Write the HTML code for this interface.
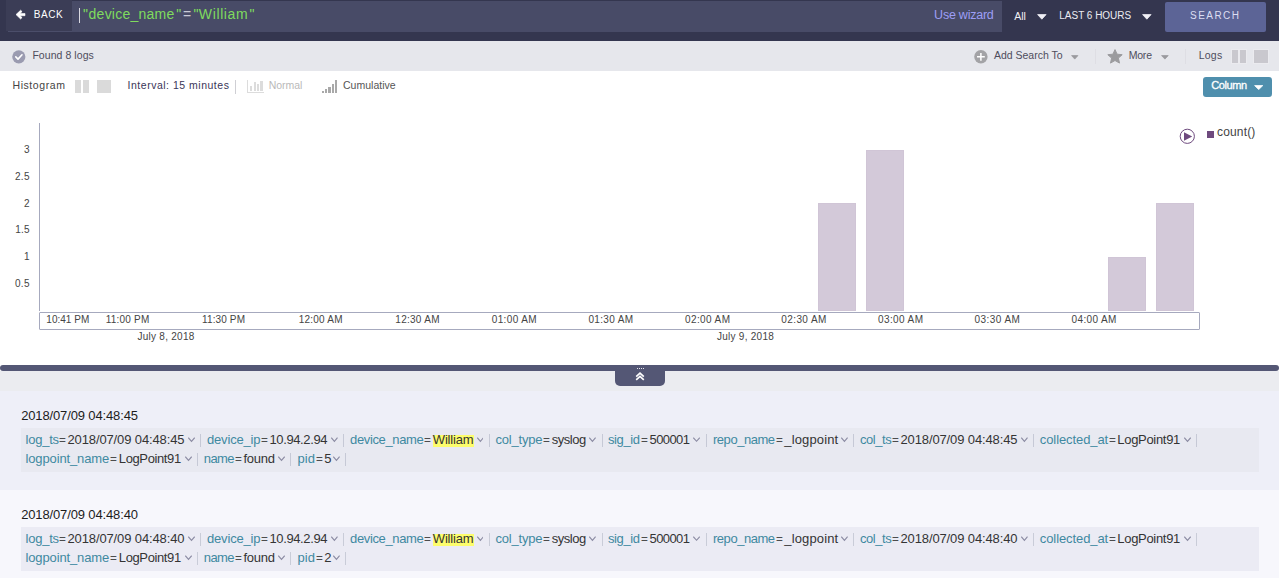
<!DOCTYPE html>
<html><head><meta charset="utf-8"><title>Search</title>
<style>
html,body{margin:0;padding:0;}
body{width:1279px;height:578px;overflow:hidden;position:relative;background:#fff;font-family:"Liberation Sans",sans-serif;}
.t{position:absolute;white-space:pre;line-height:20px;height:20px;display:block;}
.r{position:absolute;display:block;}
</style></head><body>
<div class="r" style="left:0px;top:0px;width:1279px;height:41px;background:#34364f;"></div>
<div class="r" style="left:6px;top:0px;width:66px;height:31px;background:#3b3d56;"></div>
<div class="r" style="left:8px;top:31px;width:64px;height:1px;background:#4b4e6a;"></div>
<div class="r" style="left:72px;top:1px;width:930px;height:31px;background:#484b67;"></div>
<svg class="r" style="left:15px;top:9px" width="12" height="12" viewBox="0 0 12 12"><path d="M5.6 1.2 L1 5.6 L5.6 10 L7.1 8.6 L5.1 6.7 H10 V4.5 H5.1 L7.1 2.6 Z" fill="#fff" stroke="#fff" stroke-width="0.6" stroke-linejoin="round"/></svg>
<span class="t" style="left:33.80px;top:4.93px;font-size:10px;color:#ffffff;letter-spacing:0.556px;">BACK</span>
<div class="r" style="left:79px;top:8px;width:1px;height:15px;background:#d8d8e0;"></div>
<span class="t" style="left:83.00px;top:4.05px;font-size:14px;color:#7fdb5e;">&quot;</span>
<span class="t" style="left:88.60px;top:4.05px;font-size:14px;color:#7fdb5e;letter-spacing:0.232px;">device_name</span>
<span class="t" style="left:176.30px;top:4.05px;font-size:14px;color:#7fdb5e;">&quot;</span>
<span class="t" style="left:183.00px;top:4.05px;font-size:14px;color:#c9cad6;">=</span>
<span class="t" style="left:193.40px;top:4.05px;font-size:14px;color:#7fdb5e;">&quot;</span>
<span class="t" style="left:198.80px;top:4.05px;font-size:14px;color:#7fdb5e;letter-spacing:0.633px;">William</span>
<span class="t" style="left:249.40px;top:4.05px;font-size:14px;color:#7fdb5e;">&quot;</span>
<span class="t" style="left:934.10px;top:4.67px;font-size:12.5px;color:#9d9ef6;letter-spacing:-0.236px;">Use wizard</span>
<span class="t" style="left:1014.20px;top:5.56px;font-size:10.5px;color:#f0f0f5;letter-spacing:0.015px;">All</span>
<svg class="r" style="left:1037.3px;top:14.2px" width="9.7" height="5.6" viewBox="0 0 9.7 5.6"><path d="M0.6 0.6 H9.1 L4.85 5.199999999999999 Z" fill="#f0f0f6" stroke="#f0f0f6" stroke-width="0.8" stroke-linejoin="round"/></svg>
<span class="t" style="left:1059.30px;top:5.73px;font-size:10px;color:#ececf2;letter-spacing:-0.015px;">LAST 6 HOURS</span>
<svg class="r" style="left:1141.9px;top:14.2px" width="9.7" height="5.6" viewBox="0 0 9.7 5.6"><path d="M0.6 0.6 H9.1 L4.85 5.199999999999999 Z" fill="#f0f0f6" stroke="#f0f0f6" stroke-width="0.8" stroke-linejoin="round"/></svg>
<div class="r" style="left:1165px;top:2px;width:101px;height:30px;background:#5c6496;border-radius:2px;"></div>
<span class="t" style="left:1190.00px;top:5.73px;font-size:10px;color:#dcdef2;letter-spacing:1.465px;">SEARCH</span>
<div class="r" style="left:0px;top:41px;width:1279px;height:30px;background:#e6e7ec;"></div>
<svg class="r" style="left:12px;top:49.5px" width="14" height="14" viewBox="0 0 14 14"><circle cx="6.8" cy="6.8" r="6.6" fill="#9a9bb0"/><path d="M3.8 6.9 L6 9.1 L10 4.8" fill="none" stroke="#fff" stroke-width="1.6" stroke-linecap="round" stroke-linejoin="round"/></svg>
<span class="t" style="left:32.40px;top:45.36px;font-size:10.5px;color:#4e4d5c;letter-spacing:0.063px;">Found 8 logs</span>
<svg class="r" style="left:974px;top:49.6px" width="14" height="14" viewBox="0 0 14 14"><circle cx="6.9" cy="6.8" r="6.7" fill="#a3a3a6"/><path d="M6.9 2.9 V10.7 M3 6.8 H10.8" fill="none" stroke="#fff" stroke-width="1.5"/></svg>
<span class="t" style="left:994.00px;top:45.36px;font-size:10.5px;color:#4e4d5c;letter-spacing:-0.016px;">Add Search To</span>
<svg class="r" style="left:1071.3px;top:55.2px" width="7.5" height="4.5" viewBox="0 0 7.5 4.5"><path d="M0.6 0.6 H6.9 L3.75 4.1 Z" fill="#9a9a9e" stroke="#9a9a9e" stroke-width="0.8" stroke-linejoin="round"/></svg>
<div class="r" style="left:1095px;top:49px;width:1px;height:15px;background:#dedee4;"></div>
<svg class="r" style="left:1107.2px;top:48.6px" width="16" height="15" viewBox="0 0 16 15"><path d="M8 0.6 L10.1 5.2 L15.2 5.7 L11.4 9.1 L12.5 14.1 L8 11.5 L3.5 14.1 L4.6 9.1 L0.8 5.7 L5.9 5.2 Z" fill="#9b9b9e" stroke="#9b9b9e" stroke-width="1" stroke-linejoin="round"/></svg>
<span class="t" style="left:1128.70px;top:45.26px;font-size:10.5px;color:#4e4d5c;letter-spacing:-0.208px;">More</span>
<svg class="r" style="left:1161px;top:55.2px" width="7.8" height="4.5" viewBox="0 0 7.8 4.5"><path d="M0.6 0.6 H7.2 L3.9 4.1 Z" fill="#9a9a9e" stroke="#9a9a9e" stroke-width="0.8" stroke-linejoin="round"/></svg>
<div class="r" style="left:1185px;top:49px;width:1px;height:15px;background:#dedee4;"></div>
<span class="t" style="left:1198.70px;top:45.26px;font-size:10.5px;color:#4e4d5c;letter-spacing:0.244px;">Logs</span>
<div class="r" style="left:1231px;top:49px;width:16px;height:15px;background:#ebebef;"></div>
<div class="r" style="left:1253px;top:49px;width:16px;height:15px;background:#ebebef;"></div>
<div class="r" style="left:1232.3px;top:50px;width:5.8px;height:12.8px;background:#c9c8ce;"></div>
<div class="r" style="left:1240.1px;top:50px;width:5.8px;height:12.8px;background:#c9c8ce;"></div>
<div class="r" style="left:1254.4px;top:50px;width:13.3px;height:12.8px;background:#c9c8ce;"></div>
<span class="t" style="left:12.50px;top:75.16px;font-size:10.5px;color:#444;letter-spacing:0.569px;">Histogram</span>
<div class="r" style="left:75.4px;top:80px;width:5.6px;height:12.7px;background:#dadada;"></div>
<div class="r" style="left:83.1px;top:80px;width:5.6px;height:12.7px;background:#dadada;"></div>
<div class="r" style="left:97.3px;top:80px;width:13.4px;height:12.7px;background:#dadada;"></div>
<span class="t" style="left:127.60px;top:75.16px;font-size:10.5px;color:#3a3658;letter-spacing:0.509px;">Interval: 15 minutes</span>
<div class="r" style="left:235px;top:80px;width:1px;height:14px;background:#cfcfd4;"></div>
<div class="r" style="left:247px;top:80px;width:1px;height:12.6px;background:#dcdcdc;"></div>
<div class="r" style="left:247px;top:92px;width:17px;height:1px;background:#dcdcdc;"></div>
<div class="r" style="left:250.2px;top:86px;width:2.3px;height:4.8px;background:#dcdcdc;"></div>
<div class="r" style="left:253.6px;top:82.3px;width:2.4px;height:8.5px;background:#dcdcdc;"></div>
<div class="r" style="left:257px;top:83.7px;width:2.4px;height:7.1px;background:#dcdcdc;"></div>
<div class="r" style="left:260.4px;top:81.1px;width:2.2px;height:9.7px;background:#dcdcdc;"></div>
<span class="t" style="left:268.80px;top:75.16px;font-size:10.5px;color:#b9b9b9;letter-spacing:-0.048px;">Normal</span>
<div class="r" style="left:322.1px;top:90.5px;width:2px;height:2.2px;background:#a9a9a9;"></div>
<div class="r" style="left:325.1px;top:89.3px;width:2.2px;height:3.4px;background:#a9a9a9;"></div>
<div class="r" style="left:328.4px;top:87.2px;width:2.2px;height:5.5px;background:#a9a9a9;"></div>
<div class="r" style="left:331.6px;top:84px;width:2.1px;height:8.7px;background:#a9a9a9;"></div>
<div class="r" style="left:334.9px;top:80px;width:2.1px;height:12.7px;background:#a9a9a9;"></div>
<span class="t" style="left:343.00px;top:75.16px;font-size:10.5px;color:#555;letter-spacing:0.020px;">Cumulative</span>
<div class="r" style="left:1203px;top:77px;width:69px;height:20px;background:#4f8fad;border-radius:3px;"></div>
<span class="t" style="left:1211.30px;top:75.19px;font-size:11px;color:#fff;letter-spacing:-0.401px;-webkit-text-stroke:0.3px #fff;">Column</span>
<svg class="r" style="left:1254px;top:84.6px" width="9.4" height="5.0" viewBox="0 0 9.4 5.0"><path d="M0.6 0.6 H8.8 L4.7 4.6 Z" fill="#fff" stroke="#fff" stroke-width="0.8" stroke-linejoin="round"/></svg>
<div class="r" style="left:39px;top:123px;width:1px;height:188px;background:#a6a9be;"></div>
<div class="r" style="left:39px;top:312px;width:1159px;height:16px;border:1px solid #a6a9be;border-radius:1px;background:#fff"></div>
<span class="t" style="left:23.94px;top:139.63px;font-size:10px;color:#444;">3</span>
<span class="t" style="left:14.90px;top:166.63px;font-size:10px;color:#444;letter-spacing:0.349px;">2.5</span>
<span class="t" style="left:23.94px;top:193.63px;font-size:10px;color:#444;">2</span>
<span class="t" style="left:15.30px;top:219.63px;font-size:10px;color:#444;letter-spacing:0.149px;">1.5</span>
<span class="t" style="left:23.94px;top:246.64px;font-size:10px;color:#444;">1</span>
<span class="t" style="left:14.90px;top:273.63px;font-size:10px;color:#444;letter-spacing:0.349px;">0.5</span>
<div class="r" style="left:817.6px;top:203.3px;width:38.1px;height:107.7px;background:#d3c9d9;box-shadow:inset 0 0 0 1px #d0c5d6;"></div>
<div class="r" style="left:866.0px;top:149.7px;width:38.1px;height:161.3px;background:#d3c9d9;box-shadow:inset 0 0 0 1px #d0c5d6;"></div>
<div class="r" style="left:1107.6px;top:256.9px;width:38.1px;height:54.1px;background:#d3c9d9;box-shadow:inset 0 0 0 1px #d0c5d6;"></div>
<div class="r" style="left:1155.9px;top:203.3px;width:38.1px;height:107.7px;background:#d3c9d9;box-shadow:inset 0 0 0 1px #d0c5d6;"></div>
<span class="t" style="left:46.30px;top:309.53px;font-size:10px;color:#444;letter-spacing:0.028px;">10:41 PM</span>
<span class="t" style="left:105.80px;top:309.53px;font-size:10px;color:#444;letter-spacing:0.206px;">11:00 PM</span>
<span class="t" style="left:202.00px;top:309.53px;font-size:10px;color:#444;letter-spacing:0.134px;">11:30 PM</span>
<span class="t" style="left:298.80px;top:309.53px;font-size:10px;color:#444;letter-spacing:0.207px;">12:00 AM</span>
<span class="t" style="left:395.30px;top:309.53px;font-size:10px;color:#444;letter-spacing:0.278px;">12:30 AM</span>
<span class="t" style="left:491.80px;top:309.53px;font-size:10px;color:#444;letter-spacing:0.350px;">01:00 AM</span>
<span class="t" style="left:588.40px;top:309.53px;font-size:10px;color:#444;letter-spacing:0.336px;">01:30 AM</span>
<span class="t" style="left:685.00px;top:309.53px;font-size:10px;color:#444;letter-spacing:0.393px;">02:00 AM</span>
<span class="t" style="left:781.30px;top:309.53px;font-size:10px;color:#444;letter-spacing:0.393px;">02:30 AM</span>
<span class="t" style="left:878.00px;top:309.53px;font-size:10px;color:#444;letter-spacing:0.393px;">03:00 AM</span>
<span class="t" style="left:974.50px;top:309.53px;font-size:10px;color:#444;letter-spacing:0.450px;">03:30 AM</span>
<span class="t" style="left:1071.50px;top:309.53px;font-size:10px;color:#444;letter-spacing:0.378px;">04:00 AM</span>
<span class="t" style="left:137.50px;top:326.53px;font-size:10px;color:#444;letter-spacing:0.261px;">July 8, 2018</span>
<span class="t" style="left:717.00px;top:326.53px;font-size:10px;color:#444;letter-spacing:0.261px;">July 9, 2018</span>
<svg class="r" style="left:1179px;top:127.5px" width="17" height="17" viewBox="0 0 17 17"><circle cx="8.3" cy="8.3" r="7.1" fill="#fff" stroke="#6e4a7e" stroke-width="1"/><path d="M5 4.2 L13.2 8.4 L5 12.7 Z" fill="#6e4a7e"/></svg>
<div class="r" style="left:1207px;top:130.7px;width:7.1px;height:7.1px;background:#6e4a7e;"></div>
<span class="t" style="left:1217.00px;top:122.44px;font-size:12px;color:#444;letter-spacing:0.159px;">count()</span>
<div class="r" style="left:0px;top:371px;width:1279px;height:20px;background:#ebecf0;"></div>
<div class="r" style="left:0px;top:365px;width:1279px;height:6px;background:#545775;border-radius:3px;"></div>
<div class="r" style="left:615px;top:368px;width:50px;height:18px;background:#545775;border-radius:0 0 5px 5px;"></div>
<div class="r" style="left:637px;top:367.5px;width:1px;height:1px;background:#e8e8f0;"></div>
<div class="r" style="left:639px;top:367.5px;width:1px;height:1px;background:#e8e8f0;"></div>
<div class="r" style="left:641px;top:367.5px;width:1px;height:1px;background:#e8e8f0;"></div>
<div class="r" style="left:643px;top:367.5px;width:1px;height:1px;background:#e8e8f0;"></div>
<svg class="r" style="left:635px;top:372px" width="10" height="9" viewBox="0 0 10 9"><path d="M1.2 4.6 L5 1.2 L8.8 4.6 M1.2 7.8 L5 4.4 L8.8 7.8" fill="none" stroke="#fff" stroke-width="1.7"/></svg>
<div class="r" style="left:0px;top:391px;width:1279px;height:99px;background:#eeeff8;"></div>
<div class="r" style="left:21px;top:428px;width:1238px;height:43.5px;background:#e8e9f1;"></div>
<span class="t" style="left:21.20px;top:405.50px;font-size:13px;color:#1c1c1c;letter-spacing:-0.138px;">2018/07/09 04:48:45</span>
<span class="t" style="left:25.50px;top:429.90px;font-size:13px;color:#3f89a1;letter-spacing:-0.238px;">log_ts</span>
<span class="t" style="left:59.20px;top:429.90px;font-size:13px;color:#4c4c4c;transform:scaleX(0.9);transform-origin:left;">=</span>
<span class="t" style="left:67.50px;top:429.90px;font-size:13px;color:#343434;letter-spacing:-0.127px;">2018/07/09 04:48:45</span>
<svg class="r" style="left:187.50px;top:437.30px" width="7.00" height="6" viewBox="0 0 7.00 6"><path d="M0.3 0.7 L3.50 4.3 L6.70 0.7" fill="none" stroke="#8a8aa2" stroke-width="1.1"/></svg>
<div class="r" style="left:200.3px;top:434.2px;width:1px;height:13px;background:#c6c9d6;"></div>
<span class="t" style="left:207.00px;top:429.90px;font-size:13px;color:#3f89a1;letter-spacing:-0.178px;">device_ip</span>
<span class="t" style="left:261.00px;top:429.90px;font-size:13px;color:#4c4c4c;transform:scaleX(0.9);transform-origin:left;">=</span>
<span class="t" style="left:269.50px;top:429.90px;font-size:13px;color:#343434;letter-spacing:-0.383px;">10.94.2.94</span>
<svg class="r" style="left:330.80px;top:437.30px" width="6.80" height="6" viewBox="0 0 6.80 6"><path d="M0.3 0.7 L3.40 4.3 L6.50 0.7" fill="none" stroke="#8a8aa2" stroke-width="1.1"/></svg>
<div class="r" style="left:343.0px;top:434.2px;width:1px;height:13px;background:#c6c9d6;"></div>
<span class="t" style="left:350.00px;top:429.90px;font-size:13px;color:#3f89a1;letter-spacing:-0.353px;">device_name</span>
<span class="t" style="left:424.00px;top:429.90px;font-size:13px;color:#4c4c4c;transform:scaleX(0.9);transform-origin:left;">=</span>
<div class="r" style="left:433px;top:435px;width:41.2px;height:12px;background:#fdfd6c;"></div>
<span class="t" style="left:432.80px;top:429.90px;font-size:13px;color:#343434;letter-spacing:-0.180px;">William</span>
<svg class="r" style="left:476.50px;top:437.30px" width="6.80" height="6" viewBox="0 0 6.80 6"><path d="M0.3 0.7 L3.40 4.3 L6.50 0.7" fill="none" stroke="#8a8aa2" stroke-width="1.1"/></svg>
<div class="r" style="left:488.7px;top:434.2px;width:1px;height:13px;background:#c6c9d6;"></div>
<span class="t" style="left:495.50px;top:429.90px;font-size:13px;color:#3f89a1;letter-spacing:-0.203px;">col_type</span>
<span class="t" style="left:543.20px;top:429.90px;font-size:13px;color:#4c4c4c;transform:scaleX(0.9);transform-origin:left;">=</span>
<span class="t" style="left:551.80px;top:429.90px;font-size:13px;color:#343434;letter-spacing:-0.490px;">syslog</span>
<svg class="r" style="left:589.30px;top:437.30px" width="6.90" height="6" viewBox="0 0 6.90 6"><path d="M0.3 0.7 L3.45 4.3 L6.60 0.7" fill="none" stroke="#8a8aa2" stroke-width="1.1"/></svg>
<div class="r" style="left:601.5px;top:434.2px;width:1px;height:13px;background:#c6c9d6;"></div>
<span class="t" style="left:608.00px;top:429.90px;font-size:13px;color:#3f89a1;letter-spacing:-0.393px;">sig_id</span>
<span class="t" style="left:641.00px;top:429.90px;font-size:13px;color:#4c4c4c;transform:scaleX(0.9);transform-origin:left;">=</span>
<span class="t" style="left:649.50px;top:429.90px;font-size:13px;color:#343434;letter-spacing:-0.576px;">500001</span>
<svg class="r" style="left:693.30px;top:437.30px" width="7.10" height="6" viewBox="0 0 7.10 6"><path d="M0.3 0.7 L3.55 4.3 L6.80 0.7" fill="none" stroke="#8a8aa2" stroke-width="1.1"/></svg>
<div class="r" style="left:705.8px;top:434.2px;width:1px;height:13px;background:#c6c9d6;"></div>
<span class="t" style="left:713.00px;top:429.90px;font-size:13px;color:#3f89a1;letter-spacing:-0.471px;">repo_name</span>
<span class="t" style="left:775.90px;top:429.90px;font-size:13px;color:#4c4c4c;transform:scaleX(0.9);transform-origin:left;">=</span>
<span class="t" style="left:784.30px;top:429.90px;font-size:13px;color:#343434;letter-spacing:0.141px;">_logpoint</span>
<svg class="r" style="left:840.80px;top:437.30px" width="6.90" height="6" viewBox="0 0 6.90 6"><path d="M0.3 0.7 L3.45 4.3 L6.60 0.7" fill="none" stroke="#8a8aa2" stroke-width="1.1"/></svg>
<div class="r" style="left:853.0px;top:434.2px;width:1px;height:13px;background:#c6c9d6;"></div>
<span class="t" style="left:860.00px;top:429.90px;font-size:13px;color:#3f89a1;letter-spacing:-0.432px;">col_ts</span>
<span class="t" style="left:892.20px;top:429.90px;font-size:13px;color:#4c4c4c;transform:scaleX(0.9);transform-origin:left;">=</span>
<span class="t" style="left:900.50px;top:429.90px;font-size:13px;color:#343434;letter-spacing:-0.127px;">2018/07/09 04:48:45</span>
<svg class="r" style="left:1020.80px;top:437.30px" width="6.80" height="6" viewBox="0 0 6.80 6"><path d="M0.3 0.7 L3.40 4.3 L6.50 0.7" fill="none" stroke="#8a8aa2" stroke-width="1.1"/></svg>
<div class="r" style="left:1032.9px;top:434.2px;width:1px;height:13px;background:#c6c9d6;"></div>
<span class="t" style="left:1039.80px;top:429.90px;font-size:13px;color:#3f89a1;letter-spacing:-0.089px;">collected_at</span>
<span class="t" style="left:1108.80px;top:429.90px;font-size:13px;color:#4c4c4c;transform:scaleX(0.9);transform-origin:left;">=</span>
<span class="t" style="left:1117.30px;top:429.90px;font-size:13px;color:#343434;letter-spacing:-0.309px;">LogPoint91</span>
<svg class="r" style="left:1183.50px;top:437.30px" width="7.00" height="6" viewBox="0 0 7.00 6"><path d="M0.3 0.7 L3.50 4.3 L6.70 0.7" fill="none" stroke="#8a8aa2" stroke-width="1.1"/></svg>
<div class="r" style="left:1195.5px;top:434.2px;width:1px;height:13px;background:#c6c9d6;"></div>
<span class="t" style="left:25.50px;top:448.90px;font-size:13px;color:#3f89a1;letter-spacing:-0.132px;">logpoint_name</span>
<span class="t" style="left:109.80px;top:448.90px;font-size:13px;color:#4c4c4c;transform:scaleX(0.9);transform-origin:left;">=</span>
<span class="t" style="left:118.80px;top:448.90px;font-size:13px;color:#343434;letter-spacing:-0.376px;">LogPoint91</span>
<svg class="r" style="left:185.00px;top:456.30px" width="7.00" height="6" viewBox="0 0 7.00 6"><path d="M0.3 0.7 L3.50 4.3 L6.70 0.7" fill="none" stroke="#8a8aa2" stroke-width="1.1"/></svg>
<div class="r" style="left:197.0px;top:453.2px;width:1px;height:13px;background:#c6c9d6;"></div>
<span class="t" style="left:203.80px;top:448.90px;font-size:13px;color:#3f89a1;letter-spacing:-0.640px;">name</span>
<span class="t" style="left:235.20px;top:448.90px;font-size:13px;color:#4c4c4c;transform:scaleX(0.9);transform-origin:left;">=</span>
<span class="t" style="left:243.50px;top:448.90px;font-size:13px;color:#343434;letter-spacing:-0.258px;">found</span>
<svg class="r" style="left:278.00px;top:456.30px" width="7.00" height="6" viewBox="0 0 7.00 6"><path d="M0.3 0.7 L3.50 4.3 L6.70 0.7" fill="none" stroke="#8a8aa2" stroke-width="1.1"/></svg>
<div class="r" style="left:290.3px;top:453.2px;width:1px;height:13px;background:#c6c9d6;"></div>
<span class="t" style="left:297.40px;top:448.90px;font-size:13px;color:#3f89a1;letter-spacing:0.126px;">pid</span>
<span class="t" style="left:315.80px;top:448.90px;font-size:13px;color:#4c4c4c;transform:scaleX(0.9);transform-origin:left;">=</span>
<span class="t" style="left:324.30px;top:448.90px;font-size:13px;color:#343434;">5</span>
<svg class="r" style="left:333.30px;top:456.30px" width="6.90" height="6" viewBox="0 0 6.90 6"><path d="M0.3 0.7 L3.45 4.3 L6.60 0.7" fill="none" stroke="#8a8aa2" stroke-width="1.1"/></svg>
<div class="r" style="left:345.3px;top:453.2px;width:1px;height:13px;background:#c6c9d6;"></div>
<div class="r" style="left:0px;top:490px;width:1279px;height:99px;background:#f7f7fc;"></div>
<div class="r" style="left:21px;top:527px;width:1238px;height:43.5px;background:#ebebf4;"></div>
<span class="t" style="left:21.20px;top:504.50px;font-size:13px;color:#1c1c1c;letter-spacing:-0.138px;">2018/07/09 04:48:40</span>
<span class="t" style="left:25.50px;top:528.90px;font-size:13px;color:#3f89a1;letter-spacing:-0.238px;">log_ts</span>
<span class="t" style="left:59.20px;top:528.90px;font-size:13px;color:#4c4c4c;transform:scaleX(0.9);transform-origin:left;">=</span>
<span class="t" style="left:67.50px;top:528.90px;font-size:13px;color:#343434;letter-spacing:-0.127px;">2018/07/09 04:48:40</span>
<svg class="r" style="left:187.50px;top:536.30px" width="7.00" height="6" viewBox="0 0 7.00 6"><path d="M0.3 0.7 L3.50 4.3 L6.70 0.7" fill="none" stroke="#8a8aa2" stroke-width="1.1"/></svg>
<div class="r" style="left:200.3px;top:533.1999999999999px;width:1px;height:13px;background:#c9ccd8;"></div>
<span class="t" style="left:207.00px;top:528.90px;font-size:13px;color:#3f89a1;letter-spacing:-0.178px;">device_ip</span>
<span class="t" style="left:261.00px;top:528.90px;font-size:13px;color:#4c4c4c;transform:scaleX(0.9);transform-origin:left;">=</span>
<span class="t" style="left:269.50px;top:528.90px;font-size:13px;color:#343434;letter-spacing:-0.383px;">10.94.2.94</span>
<svg class="r" style="left:330.80px;top:536.30px" width="6.80" height="6" viewBox="0 0 6.80 6"><path d="M0.3 0.7 L3.40 4.3 L6.50 0.7" fill="none" stroke="#8a8aa2" stroke-width="1.1"/></svg>
<div class="r" style="left:343.0px;top:533.1999999999999px;width:1px;height:13px;background:#c9ccd8;"></div>
<span class="t" style="left:350.00px;top:528.90px;font-size:13px;color:#3f89a1;letter-spacing:-0.353px;">device_name</span>
<span class="t" style="left:424.00px;top:528.90px;font-size:13px;color:#4c4c4c;transform:scaleX(0.9);transform-origin:left;">=</span>
<div class="r" style="left:433px;top:534px;width:41.2px;height:12px;background:#fdfd6c;"></div>
<span class="t" style="left:432.80px;top:528.90px;font-size:13px;color:#343434;letter-spacing:-0.180px;">William</span>
<svg class="r" style="left:476.50px;top:536.30px" width="6.80" height="6" viewBox="0 0 6.80 6"><path d="M0.3 0.7 L3.40 4.3 L6.50 0.7" fill="none" stroke="#8a8aa2" stroke-width="1.1"/></svg>
<div class="r" style="left:488.7px;top:533.1999999999999px;width:1px;height:13px;background:#c9ccd8;"></div>
<span class="t" style="left:495.50px;top:528.90px;font-size:13px;color:#3f89a1;letter-spacing:-0.203px;">col_type</span>
<span class="t" style="left:543.20px;top:528.90px;font-size:13px;color:#4c4c4c;transform:scaleX(0.9);transform-origin:left;">=</span>
<span class="t" style="left:551.80px;top:528.90px;font-size:13px;color:#343434;letter-spacing:-0.490px;">syslog</span>
<svg class="r" style="left:589.30px;top:536.30px" width="6.90" height="6" viewBox="0 0 6.90 6"><path d="M0.3 0.7 L3.45 4.3 L6.60 0.7" fill="none" stroke="#8a8aa2" stroke-width="1.1"/></svg>
<div class="r" style="left:601.5px;top:533.1999999999999px;width:1px;height:13px;background:#c9ccd8;"></div>
<span class="t" style="left:608.00px;top:528.90px;font-size:13px;color:#3f89a1;letter-spacing:-0.393px;">sig_id</span>
<span class="t" style="left:641.00px;top:528.90px;font-size:13px;color:#4c4c4c;transform:scaleX(0.9);transform-origin:left;">=</span>
<span class="t" style="left:649.50px;top:528.90px;font-size:13px;color:#343434;letter-spacing:-0.576px;">500001</span>
<svg class="r" style="left:693.30px;top:536.30px" width="7.10" height="6" viewBox="0 0 7.10 6"><path d="M0.3 0.7 L3.55 4.3 L6.80 0.7" fill="none" stroke="#8a8aa2" stroke-width="1.1"/></svg>
<div class="r" style="left:705.8px;top:533.1999999999999px;width:1px;height:13px;background:#c9ccd8;"></div>
<span class="t" style="left:713.00px;top:528.90px;font-size:13px;color:#3f89a1;letter-spacing:-0.471px;">repo_name</span>
<span class="t" style="left:775.90px;top:528.90px;font-size:13px;color:#4c4c4c;transform:scaleX(0.9);transform-origin:left;">=</span>
<span class="t" style="left:784.30px;top:528.90px;font-size:13px;color:#343434;letter-spacing:0.141px;">_logpoint</span>
<svg class="r" style="left:840.80px;top:536.30px" width="6.90" height="6" viewBox="0 0 6.90 6"><path d="M0.3 0.7 L3.45 4.3 L6.60 0.7" fill="none" stroke="#8a8aa2" stroke-width="1.1"/></svg>
<div class="r" style="left:853.0px;top:533.1999999999999px;width:1px;height:13px;background:#c9ccd8;"></div>
<span class="t" style="left:860.00px;top:528.90px;font-size:13px;color:#3f89a1;letter-spacing:-0.432px;">col_ts</span>
<span class="t" style="left:892.20px;top:528.90px;font-size:13px;color:#4c4c4c;transform:scaleX(0.9);transform-origin:left;">=</span>
<span class="t" style="left:900.50px;top:528.90px;font-size:13px;color:#343434;letter-spacing:-0.127px;">2018/07/09 04:48:40</span>
<svg class="r" style="left:1020.80px;top:536.30px" width="6.80" height="6" viewBox="0 0 6.80 6"><path d="M0.3 0.7 L3.40 4.3 L6.50 0.7" fill="none" stroke="#8a8aa2" stroke-width="1.1"/></svg>
<div class="r" style="left:1032.9px;top:533.1999999999999px;width:1px;height:13px;background:#c9ccd8;"></div>
<span class="t" style="left:1039.80px;top:528.90px;font-size:13px;color:#3f89a1;letter-spacing:-0.089px;">collected_at</span>
<span class="t" style="left:1108.80px;top:528.90px;font-size:13px;color:#4c4c4c;transform:scaleX(0.9);transform-origin:left;">=</span>
<span class="t" style="left:1117.30px;top:528.90px;font-size:13px;color:#343434;letter-spacing:-0.309px;">LogPoint91</span>
<svg class="r" style="left:1183.50px;top:536.30px" width="7.00" height="6" viewBox="0 0 7.00 6"><path d="M0.3 0.7 L3.50 4.3 L6.70 0.7" fill="none" stroke="#8a8aa2" stroke-width="1.1"/></svg>
<div class="r" style="left:1195.5px;top:533.1999999999999px;width:1px;height:13px;background:#c9ccd8;"></div>
<span class="t" style="left:25.50px;top:547.90px;font-size:13px;color:#3f89a1;letter-spacing:-0.132px;">logpoint_name</span>
<span class="t" style="left:109.80px;top:547.90px;font-size:13px;color:#4c4c4c;transform:scaleX(0.9);transform-origin:left;">=</span>
<span class="t" style="left:118.80px;top:547.90px;font-size:13px;color:#343434;letter-spacing:-0.376px;">LogPoint91</span>
<svg class="r" style="left:185.00px;top:555.30px" width="7.00" height="6" viewBox="0 0 7.00 6"><path d="M0.3 0.7 L3.50 4.3 L6.70 0.7" fill="none" stroke="#8a8aa2" stroke-width="1.1"/></svg>
<div class="r" style="left:197.0px;top:552.1999999999999px;width:1px;height:13px;background:#c9ccd8;"></div>
<span class="t" style="left:203.80px;top:547.90px;font-size:13px;color:#3f89a1;letter-spacing:-0.640px;">name</span>
<span class="t" style="left:235.20px;top:547.90px;font-size:13px;color:#4c4c4c;transform:scaleX(0.9);transform-origin:left;">=</span>
<span class="t" style="left:243.50px;top:547.90px;font-size:13px;color:#343434;letter-spacing:-0.258px;">found</span>
<svg class="r" style="left:278.00px;top:555.30px" width="7.00" height="6" viewBox="0 0 7.00 6"><path d="M0.3 0.7 L3.50 4.3 L6.70 0.7" fill="none" stroke="#8a8aa2" stroke-width="1.1"/></svg>
<div class="r" style="left:290.3px;top:552.1999999999999px;width:1px;height:13px;background:#c9ccd8;"></div>
<span class="t" style="left:297.40px;top:547.90px;font-size:13px;color:#3f89a1;letter-spacing:0.126px;">pid</span>
<span class="t" style="left:315.80px;top:547.90px;font-size:13px;color:#4c4c4c;transform:scaleX(0.9);transform-origin:left;">=</span>
<span class="t" style="left:324.30px;top:547.90px;font-size:13px;color:#343434;">2</span>
<svg class="r" style="left:333.30px;top:555.30px" width="6.90" height="6" viewBox="0 0 6.90 6"><path d="M0.3 0.7 L3.45 4.3 L6.60 0.7" fill="none" stroke="#8a8aa2" stroke-width="1.1"/></svg>
<div class="r" style="left:345.3px;top:552.1999999999999px;width:1px;height:13px;background:#c9ccd8;"></div>
</body></html>
